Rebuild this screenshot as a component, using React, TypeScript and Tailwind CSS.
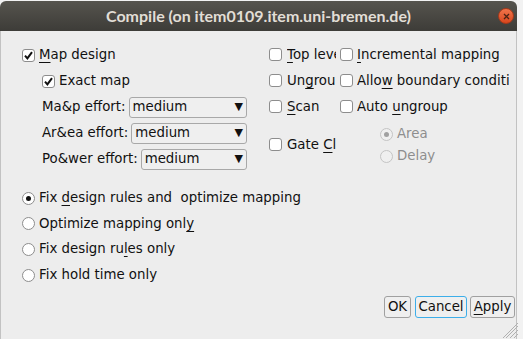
import React from "react";

const font = "font-['DejaVu_Sans',sans-serif] text-[13.33px] text-[#111]";

const Check = ({ checked = false }: { checked?: boolean }) => (
  <span className="w-[13px] h-[13px] shrink-0 rounded-[3px] border border-[#8d8d8d] bg-white flex items-center justify-center">
    {checked && (
      <svg width="9" height="9" viewBox="0 0 9 9">
        <path d="M1 4.6 L3.4 7.3 L8 1.2" fill="none" stroke="#111" strokeWidth="2" />
      </svg>
    )}
  </span>
);

const Radio = ({ on = false, disabled = false }: { on?: boolean; disabled?: boolean }) => (
  <span
    className={`w-[13px] h-[13px] shrink-0 rounded-full border flex items-center justify-center ${
      disabled ? "border-[#c4c4c4] bg-[#efefef]" : "border-[#8d8d8d] bg-white"
    }`}
  >
    {on && <span className={`w-[5px] h-[5px] rounded-full ${disabled ? "bg-[#a0a0a0]" : "bg-[#111]"}`} />}
  </span>
);

const U = ({ children }: { children: React.ReactNode }) => (
  <span className="underline decoration-1 underline-offset-[3px]">{children}</span>
);

const Select = () => (
  <div className="flex-1 h-[21px] ml-[3px] rounded-[3px] border border-[#a8a8a8] bg-[#efefef] flex items-center pl-[3px] pr-[3px]">
    <span className="flex-1">medium</span>
    <span className="text-[11px]">▼</span>
  </div>
);

export default function App() {
  return (
    <div className={`w-[523px] h-[339px] bg-[#f2f2f2] overflow-hidden relative ${font}`}>
      <div className="w-[517px] mt-[1px] flex flex-col">
        {/* title bar */}
        <div className="h-[30px] rounded-t-[6px] bg-gradient-to-b from-[#56544e] to-[#3d3c38] flex items-center relative">
          <div className="flex-1 text-center font-['Lato',sans-serif] font-bold text-[16px] text-[#e2ded6]">
            Compile (on item0109.item.uni-bremen.de)
          </div>
          <div className="absolute right-[3px] top-[7px] w-[16px] h-[16px] rounded-full bg-gradient-to-b from-[#f0744a] to-[#d8461c] border border-[#a8391a] flex items-center justify-center">
            <svg width="7" height="7" viewBox="0 0 7 7">
              <path d="M1 1 L6 6 M6 1 L1 6" stroke="#4a2314" strokeWidth="1.3" />
            </svg>
          </div>
        </div>

        {/* body */}
        <div className="h-[308px] bg-[#ededed] border-x border-[#c2c2c2] pt-[11px] pl-[21px] flex flex-col">
          <div className="flex">
            {/* left column */}
            <div className="w-[225px] flex flex-col">
              <div className="h-[26px] flex items-center gap-[4px]">
                <Check checked />
                <span><U>M</U>ap design</span>
              </div>
              <div className="h-[26px] flex items-center gap-[4px] pl-[20px]">
                <Check checked />
                <span>Exact map</span>
              </div>
              <div className="h-[26px] flex items-center pl-[20px]">
                <span>Ma&amp;p effort:</span>
                <Select />
              </div>
              <div className="h-[26px] flex items-center pl-[20px]">
                <span>Ar&amp;ea effort:</span>
                <Select />
              </div>
              <div className="h-[26px] flex items-center pl-[20px]">
                <span>Po&amp;wer effort:</span>
                <Select />
              </div>
            </div>

            {/* right column */}
            <div className="ml-[22px] flex flex-col">
              {[
                [<><U>T</U>op level</>, <><U>I</U>ncremental mapping</>],
                [<>Un<U>g</U>roup</>, <>Allo<U>w</U> boundary conditions</>],
                [<><U>S</U>can</>, <>Auto <U>u</U>ngroup</>],
              ].map((r, i) => (
                <div key={i} className="h-[26px] flex items-center">
                  <div className="w-[71px] flex items-center gap-[5px]">
                    <Check />
                    <span className="w-[49px] overflow-hidden whitespace-nowrap">{r[0]}</span>
                  </div>
                  <div className="flex items-center gap-[4px]">
                    <Check />
                    <span className="w-[152px] overflow-hidden whitespace-nowrap">{r[1]}</span>
                  </div>
                </div>
              ))}
              <div className="mt-[3px] h-[44px] flex items-center">
                <div className="w-[111px] flex items-center gap-[5px]">
                  <Check />
                  <span className="w-[49px] overflow-hidden whitespace-nowrap">Gate <U>C</U>lock</span>
                </div>
                <div className="flex flex-col text-[#8e8e8e]">
                  <div className="h-[22px] flex items-center gap-[4px]">
                    <Radio on disabled />
                    <span>Area</span>
                  </div>
                  <div className="h-[22px] flex items-center gap-[4px]">
                    <Radio disabled />
                    <span>Delay</span>
                  </div>
                </div>
              </div>
            </div>
          </div>

          {/* radio group */}
          <div className="mt-[13px] flex flex-col">
            <div className="h-[26px] flex items-center gap-[4px]">
              <Radio on />
              <span className="whitespace-pre">Fix <U>d</U>esign rules and  optimize mapping</span>
            </div>
            <div className="h-[25px] flex items-center gap-[4px]">
              <Radio />
              <span>Optimize mapping onl<U>y</U></span>
            </div>
            <div className="h-[26px] flex items-center gap-[4px]">
              <Radio />
              <span>Fix design ru<U>l</U>es only</span>
            </div>
            <div className="h-[26px] flex items-center gap-[4px]">
              <Radio />
              <span>Fix hold time only</span>
            </div>
          </div>

          {/* buttons */}
          <div className="mt-[8px] pr-[1px] flex justify-end">
            <button className="w-[27px] h-[22px] rounded-[3px] border border-[#a0a0a0] bg-[#efefef] flex items-center justify-center">OK</button>
            <button className="ml-[4px] w-[52px] h-[22px] rounded-[3px] border border-[#3daee9] bg-[#efefef] flex items-center justify-center">Cancel</button>
            <button className="ml-[3px] w-[45px] h-[22px] rounded-[3px] border border-[#a0a0a0] bg-[#efefef] flex items-center justify-center"><U>A</U>pply</button>
          </div>
        </div>
      </div>

      {/* resize grip */}
      <svg className="absolute right-[4px] bottom-0" width="16" height="16" viewBox="0 0 16 16">
        <path d="M15 3 L3 15 M15 7 L7 15 M15 11 L11 15 M15 0 L0 15" stroke="#b0b0b0" strokeWidth="1" />
      </svg>
    </div>
  );
}
